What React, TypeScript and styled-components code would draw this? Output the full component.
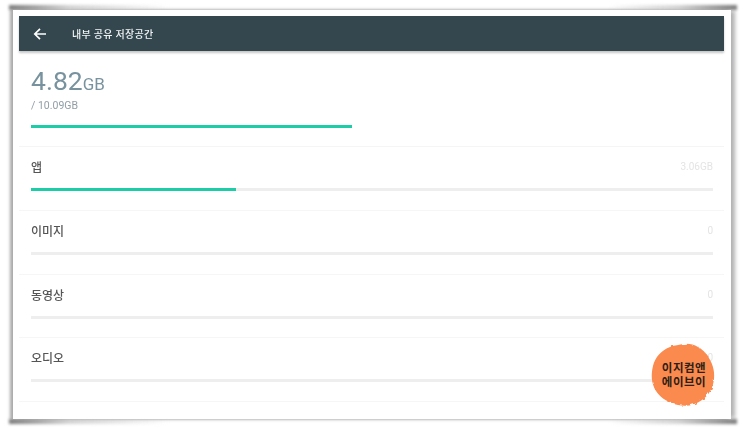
import React from 'react'
import styled, { createGlobalStyle } from 'styled-components'

const GlobalStyle = createGlobalStyle`
  html, body {
    margin: 0;
    padding: 0;
    background: #fff;
    font-family: Roboto, "Noto Sans CJK KR", sans-serif;
  }
`

const Page = styled.div`
  width: 743px;
  height: 430px;
  padding: 10px 12px 11px 13px;
  box-sizing: border-box;
  overflow: hidden;
  background: #fff;
`

const Paper = styled.div`
  position: relative;
  height: 100%;
  background: #fff;
  box-shadow: -3px 0 3px rgba(0, 0, 0, 0.34), 5px 0 4px -1px rgba(0, 0, 0, 0.3);

  &::before,
  &::after {
    content: '';
    position: absolute;
    left: -4px;
    right: -6px;
    height: 5px;
    filter: blur(1.5px);
    background: linear-gradient(
      90deg,
      rgba(90, 90, 90, 0.8) 0,
      rgba(170, 170, 170, 0.5) 60px,
      rgba(255, 255, 255, 0) 160px,
      rgba(255, 255, 255, 0) 600px,
      rgba(170, 170, 170, 0.5) 670px,
      rgba(90, 90, 90, 0.8) 100%
    );
  }

  &::before {
    top: -5px;
  }

  &::after {
    bottom: -5px;
  }
`

const Screen = styled.div`
  position: relative;
  z-index: 1;
  height: 100%;
  padding: 6px 7px 0 6px;
  box-sizing: border-box;
  background: #fff;
  filter: blur(0.4px);
`

const Header = styled.header`
  height: 35px;
  display: flex;
  align-items: center;
  background: #34474f;
  box-shadow: 0 2px 2px rgba(0, 0, 0, 0.22);
  color: #f1f4f5;
`

const BackIcon = styled.svg`
  width: 14px;
  height: 14px;
  margin-left: 14px;
  flex: none;
`

const Title = styled.h1`
  margin: 0 0 0 25px;
  font-size: 10px;
  font-weight: 500;
  letter-spacing: 0.3px;
`

const Summary = styled.section`
  height: 96.4px;
  padding: 15px 11px 0 12px;
  box-sizing: border-box;
  border-bottom: 1px solid #f5f5f5;
`

const Used = styled.div`
  height: 29px;
  line-height: 29px;
  font-size: 26.5px;
  color: #78929e;
`

const Unit = styled.span`
  font-size: 17px;
`

const Total = styled.div`
  margin-top: 5px;
  font-size: 10.5px;
  line-height: 12px;
  color: #8f9ea6;
`

const Bar = styled.div<{ $track?: boolean }>`
  height: 3px;
  background: ${(p) => (p.$track ? '#eeeeee' : 'transparent')};
`

const Fill = styled.div<{ $w: number }>`
  width: ${(p) => p.$w}px;
  height: 100%;
  background: #1ccda8;
`

const SummaryBar = styled.div`
  margin-top: 13px;
`

const Row = styled.section`
  height: 63.6px;
  padding: 11.6px 11px 0 12px;
  box-sizing: border-box;
  border-bottom: 1px solid #f6f6f6;
`

const RowHead = styled.div`
  display: flex;
  align-items: center;
  justify-content: space-between;
  height: 16px;
  margin-bottom: 13.4px;
`

const Label = styled.span`
  font-size: 12px;
  font-weight: 500;
  color: #555555;
`

const Value = styled.span`
  font-size: 10px;
  color: #e4e4e4;
`

const Badge = styled.div`
  position: absolute;
  z-index: 2;
  left: 637px;
  top: 332px;
  width: 66px;
  height: 66px;
`

const BadgeShape = styled.svg`
  position: absolute;
  inset: 0;
  width: 100%;
  height: 100%;
`

const BadgeText = styled.div`
  position: absolute;
  inset: 0;
  padding-left: 2px;
  display: flex;
  flex-direction: column;
  align-items: center;
  justify-content: center;
  font-size: 11.5px;
  line-height: 14px;
  font-weight: 700;
  letter-spacing: 0.5px;
  color: #2e2015;
`

const rows = [
  { label: '앱', value: '3.06GB', fill: 205 },
  { label: '이미지', value: '0', fill: 0 },
  { label: '동영상', value: '0', fill: 0 },
  { label: '오디오', value: '0', fill: 0 },
]

export default function App() {
  return (
    <Page>
      <GlobalStyle />
      <Paper>
        <Screen>
          <Header>
            <BackIcon viewBox="0 0 14 14" fill="none" stroke="#fff" strokeWidth="1.7">
              <path d="M13 7H2M7 1.8 1.8 7 7 12.2" />
            </BackIcon>
            <Title>내부 공유 저장공간</Title>
          </Header>
          <Summary>
            <Used>
              4.82<Unit>GB</Unit>
            </Used>
            <Total>/ 10.09GB</Total>
            <SummaryBar>
              <Bar>
                <Fill $w={321} />
              </Bar>
            </SummaryBar>
          </Summary>
          {rows.map((row) => (
            <Row key={row.label}>
              <RowHead>
                <Label>{row.label}</Label>
                <Value>{row.value}</Value>
              </RowHead>
              <Bar $track>
                <Fill $w={row.fill} />
              </Bar>
            </Row>
          ))}
        </Screen>
        <Badge>
          <BadgeShape viewBox="0 0 66 66">
            <filter id="rough">
              <feTurbulence type="fractalNoise" baseFrequency="0.25" numOctaves="2" seed="4" />
              <feDisplacementMap in="SourceGraphic" scale="3" />
            </filter>
            <path
              d="M34 2C43 1 52 6 57 13C62 20 65 28 64 37C63 46 59 53 52 58C45 63 37 65 28 63C20 61 11 57 6 49C1 41 1 32 3 24C5 15 12 8 20 5C25 3 29 3 34 2Z"
              fill="#fa8a4e"
              filter="url(#rough)"
            />
          </BadgeShape>
          <BadgeText>
            <span>이지컴앤</span>
            <span>에이브이</span>
          </BadgeText>
        </Badge>
      </Paper>
    </Page>
  )
}
